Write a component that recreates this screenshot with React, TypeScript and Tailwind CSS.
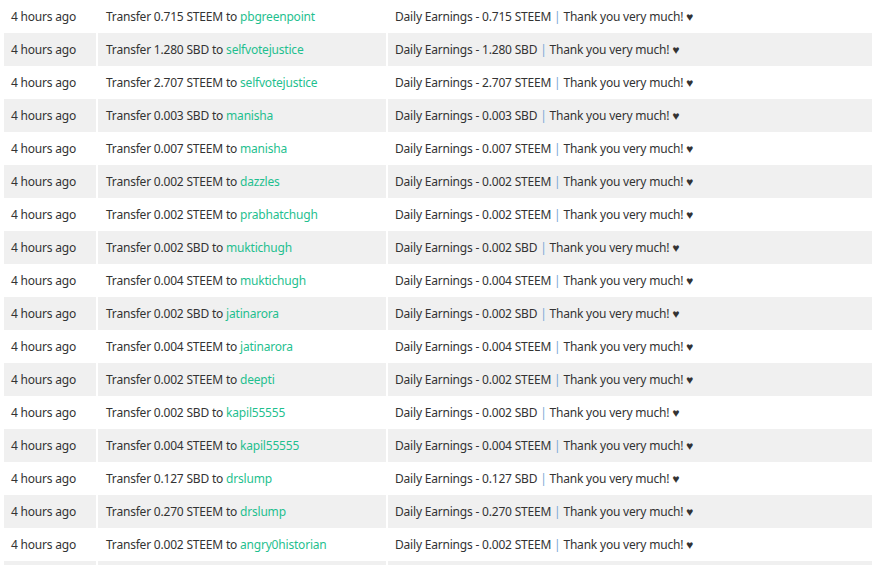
const rows: [string, string, string][] = [
  ["0.715", "STEEM", "pbgreenpoint"],
  ["1.280", "SBD", "selfvotejustice"],
  ["2.707", "STEEM", "selfvotejustice"],
  ["0.003", "SBD", "manisha"],
  ["0.007", "STEEM", "manisha"],
  ["0.002", "STEEM", "dazzles"],
  ["0.002", "STEEM", "prabhatchugh"],
  ["0.002", "SBD", "muktichugh"],
  ["0.004", "STEEM", "muktichugh"],
  ["0.002", "SBD", "jatinarora"],
  ["0.004", "STEEM", "jatinarora"],
  ["0.002", "STEEM", "deepti"],
  ["0.002", "SBD", "kapil55555"],
  ["0.004", "STEEM", "kapil55555"],
  ["0.127", "SBD", "drslump"],
  ["0.270", "STEEM", "drslump"],
  ["0.002", "STEEM", "angry0historian"],
];

export default function App() {
  return (
    <div className="w-[872px] h-[565px] overflow-hidden bg-white pl-1 text-[12px] tracking-[-0.2px] text-[#333] font-['Roboto',sans-serif]">
      {rows.map(([amt, cur, to], i) => (
        <div key={i} className="flex h-[33px] items-center gap-[2px]">
          <div className={`w-[92px] h-full flex items-center pl-[7px] ${i % 2 ? "bg-[#f0f0f0]" : ""}`}>
            4 hours ago
          </div>
          <div className={`w-[288px] h-full flex items-center pl-[8px] ${i % 2 ? "bg-[#f0f0f0]" : ""}`}>
            Transfer {amt} {cur} to&nbsp;<span className="text-[#1fbf8f]">{to}</span>
          </div>
          <div className={`flex-1 h-full flex items-center pl-[7px] ${i % 2 ? "bg-[#f0f0f0]" : ""}`}>
            Daily Earnings - {amt} {cur}&nbsp;<span className="text-[#7aa7d6]">|</span>&nbsp;Thank you very much! ♥
          </div>
        </div>
      ))}
      <div className="flex h-[33px] gap-[2px]">
        <div className="w-[92px] bg-[#f0f0f0]" />
        <div className="w-[288px] bg-[#f0f0f0]" />
        <div className="flex-1 bg-[#f0f0f0]" />
      </div>
    </div>
  );
}
